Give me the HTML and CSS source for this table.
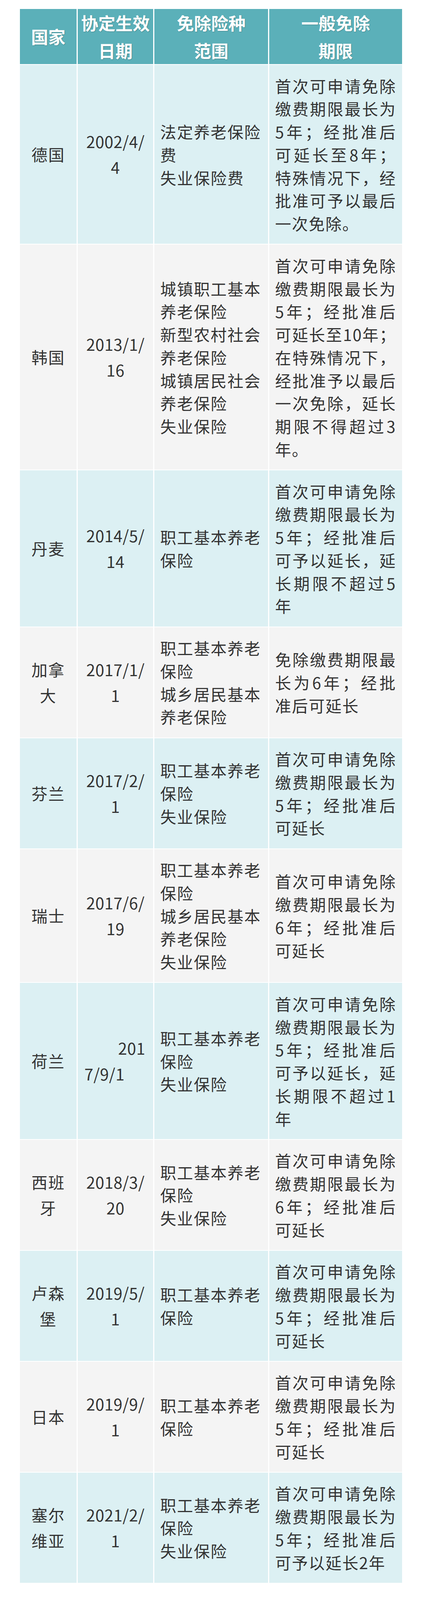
FILE: index.html
```html
<!DOCTYPE html>
<html lang="zh-CN">
<head>
<meta charset="utf-8">
<title>社保协定免除缴费一览</title>
<link rel="stylesheet" href="styles.css">
</head>
<body>
<table class="agreements">
  <colgroup>
    <col class="c-country">
    <col class="c-date">
    <col class="c-scope">
    <col class="c-term">
  </colgroup>
  <thead>
    <tr>
      <th>国家</th>
      <th>协定生效<br>日期</th>
      <th>免除险种<br>范围</th>
      <th>一般免除<br>期限</th>
    </tr>
  </thead>
  <tbody>
    <tr class="odd">
      <td class="country">德国</td>
      <td class="date">2002/4/<br>4</td>
      <td class="scope">法定养老保险费<br>失业保险费</td>
      <td class="term">首次可申请免除缴费期限最长为5年；经批准后可延长至8年；特殊情况下，经批准可予以最后一次免除。</td>
    </tr>
    <tr class="even">
      <td class="country">韩国</td>
      <td class="date">2013/1/<br>16</td>
      <td class="scope">城镇职工基本养老保险<br>新型农村社会养老保险<br>城镇居民社会养老保险<br>失业保险</td>
      <td class="term">首次可申请免除缴费期限最长为5年；经批准后可延长至10年；在特殊情况下，经批准予以最后一次免除，延长期限不得超过3年。</td>
    </tr>
    <tr class="odd">
      <td class="country">丹麦</td>
      <td class="date">2014/5/<br>14</td>
      <td class="scope">职工基本养老保险</td>
      <td class="term">首次可申请免除缴费期限最长为5年；经批准后可予以延长，延长期限不超过5年</td>
    </tr>
    <tr class="even">
      <td class="country">加拿大</td>
      <td class="date">2017/1/<br>1</td>
      <td class="scope">职工基本养老保险<br>城乡居民基本养老保险</td>
      <td class="term">免除缴费期限最长为6年；经批准后可延长</td>
    </tr>
    <tr class="odd">
      <td class="country">芬兰</td>
      <td class="date">2017/2/<br>1</td>
      <td class="scope">职工基本养老保险<br>失业保险</td>
      <td class="term">首次可申请免除缴费期限最长为5年；经批准后可延长</td>
    </tr>
    <tr class="even">
      <td class="country">瑞士</td>
      <td class="date">2017/6/<br>19</td>
      <td class="scope">职工基本养老保险<br>城乡居民基本养老保险<br>失业保险</td>
      <td class="term">首次可申请免除缴费期限最长为6年；经批准后可延长</td>
    </tr>
    <tr class="odd">
      <td class="country">荷兰</td>
      <td class="date"><span class="date-right">201</span><span class="date-left">7/9/1</span></td>
      <td class="scope">职工基本养老保险<br>失业保险</td>
      <td class="term">首次可申请免除缴费期限最长为5年；经批准后可予以延长，延长期限不超过1年</td>
    </tr>
    <tr class="even">
      <td class="country">西班牙</td>
      <td class="date">2018/3/<br>20</td>
      <td class="scope">职工基本养老保险<br>失业保险</td>
      <td class="term">首次可申请免除缴费期限最长为6年；经批准后可延长</td>
    </tr>
    <tr class="odd">
      <td class="country">卢森堡</td>
      <td class="date">2019/5/<br>1</td>
      <td class="scope">职工基本养老保险</td>
      <td class="term">首次可申请免除缴费期限最长为5年；经批准后可延长</td>
    </tr>
    <tr class="even">
      <td class="country">日本</td>
      <td class="date">2019/9/<br>1</td>
      <td class="scope">职工基本养老保险</td>
      <td class="term">首次可申请免除缴费期限最长为5年；经批准后可延长</td>
    </tr>
    <tr class="odd">
      <td class="country">塞尔维亚</td>
      <td class="date">2021/2/<br>1</td>
      <td class="scope">职工基本养老保险<br>失业保险</td>
      <td class="term">首次可申请免除缴费期限最长为5年；经批准后可予以延长2年</td>
    </tr>
  </tbody>
</table>
</body>
</html>
```

FILE: styles.css
```css
html, body {
  margin: 0;
  padding: 0;
  background: #ffffff;
}

body {
  font-family: "Noto Sans CJK SC", sans-serif;
  color: #333333;
}

.agreements {
  table-layout: fixed;
  border-collapse: separate;
  border-spacing: 3px 2px;
  width: 984px;
  margin: 21px 0 0 48px;
}

.c-country { width: 145px; }
.c-date { width: 193px; }
.c-scope { width: 291px; }
.c-term { width: 340px; }

.agreements th {
  background: #5bb0b9;
  color: #ffffff;
  font-size: 44px;
  font-weight: 700;
  line-height: 70.5px;
  padding: 0;
  text-align: center;
  vertical-align: middle;
  text-shadow: 1px 1px 2px rgba(0, 0, 0, 0.25);
}

.agreements td {
  padding: 23.5px 15px;
  vertical-align: middle;
  font-size: 41px;
  letter-spacing: 2px;
  line-height: 58.75px;
}

.odd td { background: #dcf0f3; }
.even td { background: #f4f4f4; }

.agreements td.country {
  text-align: center;
  line-height: 65.8px;
}

.agreements td.date {
  text-align: center;
  line-height: 65.8px;
  letter-spacing: 0.5px;
}

.date-right {
  display: block;
  text-align: right;
  padding-right: 5px;
}

.date-left {
  display: block;
  text-align: left;
  padding-left: 2px;
}

.agreements td.scope {
  text-align: left;
}

.agreements td.term {
  text-align: justify;
}
```
